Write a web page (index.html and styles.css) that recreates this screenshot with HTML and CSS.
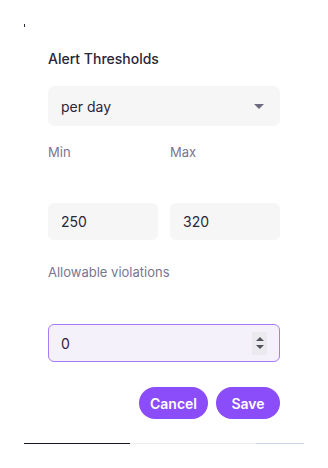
FILE: index.html
```html
<!DOCTYPE html>
<html>
<head>
<meta charset="utf-8">
<link rel="stylesheet" href="styles.css">
</head>
<body>
<div class="frame">
  <div class="corner"></div>
  <div class="dialog">
    <h2 class="title">Alert Thresholds</h2>
    <div class="select">
      <span>per day</span>
      <span class="caret"></span>
    </div>
    <div class="labels">
      <span class="label">Min</span>
      <span class="label">Max</span>
    </div>
    <div class="pair">
      <div class="field">250</div>
      <div class="field">320</div>
    </div>
    <div class="label solo">Allowable violations</div>
    <div class="field number">
      <span>0</span>
      <span class="spin"><span class="up"></span><span class="down"></span></span>
    </div>
    <div class="actions">
      <button class="btn">Cancel</button>
      <button class="btn">Save</button>
    </div>
  </div>
  <div class="edge">
    <span class="seg dark"></span>
    <span class="seg gray"></span>
    <span class="seg blue"></span>
  </div>
</div>
</body>
</html>
```

FILE: styles.css
```css
* { box-sizing: border-box; }
html, body { margin: 0; padding: 0; background: #fff; }
body {
  font-family: Inter, "Noto Sans", sans-serif;
  color: #2b2638;
}
.frame {
  margin: 24px 24px 0 24px;
  width: 280px;
  position: relative;
}
.corner {
  position: absolute;
  left: 0;
  top: 0;
  width: 1px;
  height: 3px;
  background: #2b2638;
}
.dialog {
  padding: 25px 24px 24px 24px;
  display: flex;
  flex-direction: column;
}
.title {
  margin: 0;
  font-size: 14px;
  font-weight: 500;
  line-height: 20px;
  color: #2b2638;
}
.select {
  margin-top: 17px;
  height: 40px;
  background: #f6f6f7;
  border-radius: 7px;
  display: flex;
  align-items: center;
  justify-content: space-between;
  padding: 0 16px 0 13px;
  font-size: 14px;
}
.caret {
  width: 0;
  height: 0;
  border-left: 5px solid transparent;
  border-right: 5px solid transparent;
  border-top: 5px solid #6f6a80;
}
.labels {
  margin-top: 17px;
  display: grid;
  grid-template-columns: 1fr 1fr;
  column-gap: 12px;
}
.label {
  font-size: 13px;
  line-height: 18px;
  color: #7a7590;
}
.pair {
  margin-top: 42px;
  display: grid;
  grid-template-columns: 1fr 1fr;
  column-gap: 12px;
}
.field {
  height: 37px;
  background: #f6f6f7;
  border-radius: 6px;
  display: flex;
  align-items: center;
  padding: 0 13px;
  font-size: 14px;
  color: #2b2638;
}
.solo { margin-top: 23px; }
.number {
  margin-top: 43px;
  height: 38px;
  background: #f4f1fb;
  border: 1px solid #a77bf6;
  padding: 0 12px;
  justify-content: space-between;
}
.spin {
  width: 15px;
  height: 23px;
  background: #ebebef;
  display: flex;
  flex-direction: column;
  align-items: center;
  justify-content: center;
  gap: 4px;
}
.up {
  border-left: 4px solid transparent;
  border-right: 4px solid transparent;
  border-bottom: 4px solid #555260;
}
.down {
  border-left: 4px solid transparent;
  border-right: 4px solid transparent;
  border-top: 4px solid #555260;
}
.actions {
  margin-top: 25px;
  display: flex;
  justify-content: flex-end;
  gap: 8px;
}
.btn {
  height: 32px;
  min-width: 64px;
  border: none;
  border-radius: 16px;
  background: #8b4cfa;
  color: #fff;
  font-family: Inter, "Noto Sans", sans-serif;
  font-size: 14px;
  font-weight: 600;
  padding: 0 11px;
}
.edge {
  display: flex;
  height: 1px;
}
.seg { display: block; height: 1px; }
.dark { width: 106px; background: #1c1626; }
.gray { width: 126px; background: #ececee; }
.blue { flex: 1; background: #c9d3ea; }
```
